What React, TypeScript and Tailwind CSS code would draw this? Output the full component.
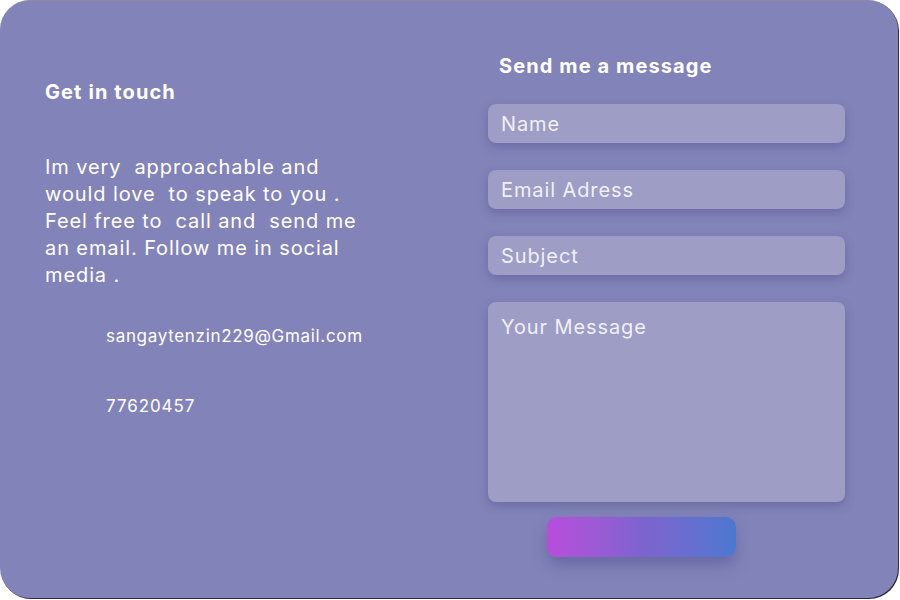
export default function App() {
  const inputCls =
    "w-[357px] h-[39px] rounded-[8px] bg-[#9d9dc5] shadow-[0_4px_10px_rgba(80,80,140,0.45)] flex items-center px-[13px] text-[20px] tracking-[0.045em] text-[#f0f0f7]";
  return (
    <div
      className="w-[900px] h-[600px] bg-white"
      style={{ fontFamily: "Inter, 'Noto Sans', sans-serif" }}
    >
      <div className="w-[898px] h-[598px] rounded-[30px] bg-[#8283b8] shadow-[1px_1px_0_#2a2a3a] border-t border-[#8a8aa0] flex">
        <div className="w-[488px] pl-[45px] pt-[78px] text-white">
          <h2 className="text-[20px] font-bold leading-[26px] tracking-[0.055em]">Get in touch</h2>
          <p className="mt-[49px] text-[20px] leading-[27px] tracking-[0.045em] whitespace-pre">
            {"Im very  approachable and\nwould love  to speak to you .\nFeel free to  call and  send me\nan email. Follow me in social\nmedia ."}
          </p>
          <div className="ml-[61px] mt-[36px] text-[17px] leading-[22px] tracking-[0.04em]">sangaytenzin229@Gmail.com</div>
          <div className="ml-[61px] mt-[48px] text-[17px] leading-[22px] tracking-[0.055em]">77620457</div>
        </div>
        <div className="flex flex-col pt-[52px]">
          <h2 className="ml-[11px] text-[20px] font-bold leading-[26px] tracking-[0.055em] text-white">Send me a message</h2>
          <div className="mt-[25px] flex flex-col gap-[27px]">
            <div className={inputCls}>Name</div>
            <div className={inputCls}>Email Adress</div>
            <div className={inputCls}>Subject</div>
            <div className="w-[357px] h-[200px] rounded-[8px] bg-[#9d9dc5] shadow-[0_4px_10px_rgba(80,80,140,0.45)] px-[13px] pt-[12px] text-[20px] leading-[26px] tracking-[0.045em] text-[#f0f0f7]">
              Your Message
            </div>
          </div>
          <div className="ml-[59px] mt-[15px] w-[189px] h-[40px] rounded-[10px] bg-gradient-to-r from-[#b94cdc] via-[#7e63cf] to-[#4a78d0] shadow-[0_8px_14px_rgba(90,90,150,0.6)]"></div>
        </div>
      </div>
    </div>
  );
}
